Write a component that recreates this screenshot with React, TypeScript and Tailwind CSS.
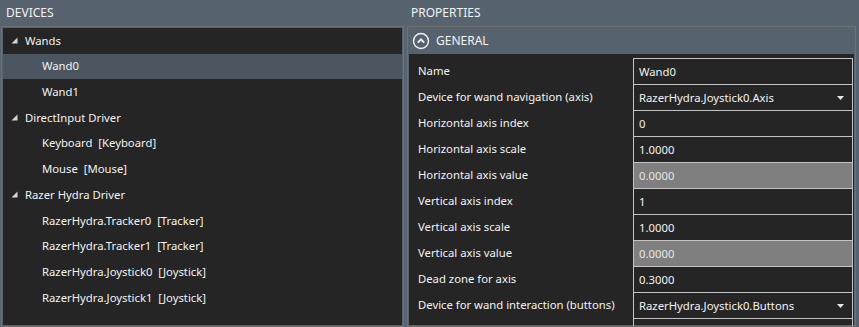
import React from "react";

const font = { fontFamily: '"Noto Sans", "Open Sans", sans-serif' };

function Expander() {
  return (
    <svg width="7" height="7" viewBox="0 0 7 7" className="block">
      <polygon points="6.5,0.5 6.5,6.5 0.5,6.5" fill="#d6d6d6" />
    </svg>
  );
}

function GroupRow({ label }: { label: string }) {
  return (
    <div className="h-[25.7px] flex items-center pl-[8px] pb-[1px] text-[#f2f2f2]">
      <div className="w-[7px] h-[7px] mt-[1px]">
        <Expander />
      </div>
      <span className="ml-[7px]">{label}</span>
    </div>
  );
}

function ChildRow({ label, selected }: { label: string; selected?: boolean }) {
  return (
    <div
      className={
        "h-[25.7px] flex items-center pl-[39px] pb-[1px] text-[#f2f2f2] whitespace-pre " +
        (selected ? "bg-[#4b5661]" : "")
      }
    >
      {label}
    </div>
  );
}

type Prop = { label: string; value: string; readonly?: boolean; dropdown?: boolean };

const props: Prop[] = [
  { label: "Name", value: "Wand0" },
  { label: "Device for wand navigation (axis)", value: "RazerHydra.Joystick0.Axis", dropdown: true },
  { label: "Horizontal axis index", value: "0" },
  { label: "Horizontal axis scale", value: "1.0000" },
  { label: "Horizontal axis value", value: "0.0000", readonly: true },
  { label: "Vertical axis index", value: "1" },
  { label: "Vertical axis scale", value: "1.0000" },
  { label: "Vertical axis value", value: "0.0000", readonly: true },
  { label: "Dead zone for axis", value: "0.3000" },
  { label: "Device for wand interaction (buttons)", value: "RazerHydra.Joystick0.Buttons", dropdown: true },
  { label: "Range of buttons", value: "0" },
];

function PropRow({ p }: { p: Prop }) {
  return (
    <div className="grid grid-cols-[224px_220px] h-[26px] shrink-0">
      <div className="flex items-center pl-[9px] text-[#f2f2f2]">{p.label}</div>
      <div
        className={
          "border-t border-l border-r border-[#c4c4c4] flex items-center pl-[5px] pr-[8px] " +
          (p.readonly ? "bg-[#7f7f7f] text-[#e6e6e6]" : "text-[#f2f2f2]")
        }
      >
        <span className="flex-1">{p.value}</span>
        {p.dropdown && (
          <svg width="7" height="4" viewBox="0 0 7 4" className="block">
            <polygon points="0,0 7,0 3.5,4" fill="#e8e8e8" />
          </svg>
        )}
      </div>
    </div>
  );
}

export default function App() {
  return (
    <div
      className="w-[859px] h-[327px] overflow-hidden bg-[#57636f] flex pl-[1px] pr-[3px] gap-[3px] text-[11.3px] leading-none"
      style={font}
    >
      <div className="w-[403px] flex flex-col min-h-0">
        <div className="h-[26px] shrink-0 flex items-center pl-[5px] text-[#f2f2f2] text-[12px]">DEVICES</div>
        <div className="flex-1 min-h-0 overflow-hidden border border-[#707070] p-px">
          <div className="h-full bg-[#252525]">
            <GroupRow label="Wands" />
            <ChildRow label="Wand0" selected />
            <ChildRow label="Wand1" />
            <GroupRow label="DirectInput Driver" />
            <ChildRow label="Keyboard  [Keyboard]" />
            <ChildRow label="Mouse  [Mouse]" />
            <GroupRow label="Razer Hydra Driver" />
            <ChildRow label="RazerHydra.Tracker0  [Tracker]" />
            <ChildRow label="RazerHydra.Tracker1  [Tracker]" />
            <ChildRow label="RazerHydra.Joystick0  [Joystick]" />
            <ChildRow label="RazerHydra.Joystick1  [Joystick]" />
          </div>
        </div>
      </div>
      <div className="w-[449px] flex flex-col min-h-0">
        <div className="h-[26px] shrink-0 flex items-center pl-[4px] text-[#f2f2f2] text-[12px]">PROPERTIES</div>
        <div className="flex-1 min-h-0 overflow-hidden border border-[#707070] p-px">
          <div className="h-full bg-[#252525] flex flex-col">
            <div className="h-[26px] shrink-0 bg-[#56636f] flex items-center pl-[3px] text-[#f2f2f2] text-[12px]">
              <svg width="18" height="18" viewBox="0 0 18 18" className="block">
                <circle cx="9" cy="9" r="7.5" fill="none" stroke="#f2f2f2" strokeWidth="1.4" />
                <polyline points="5.8,10.6 9,7.4 12.2,10.6" fill="none" stroke="#f2f2f2" strokeWidth="2" />
              </svg>
              <span className="ml-[6px]">GENERAL</span>
            </div>
            <div className="pt-[4px] shrink-0">
              {props.map((p) => (
                <PropRow key={p.label} p={p} />
              ))}
            </div>
          </div>
        </div>
      </div>
    </div>
  );
}
